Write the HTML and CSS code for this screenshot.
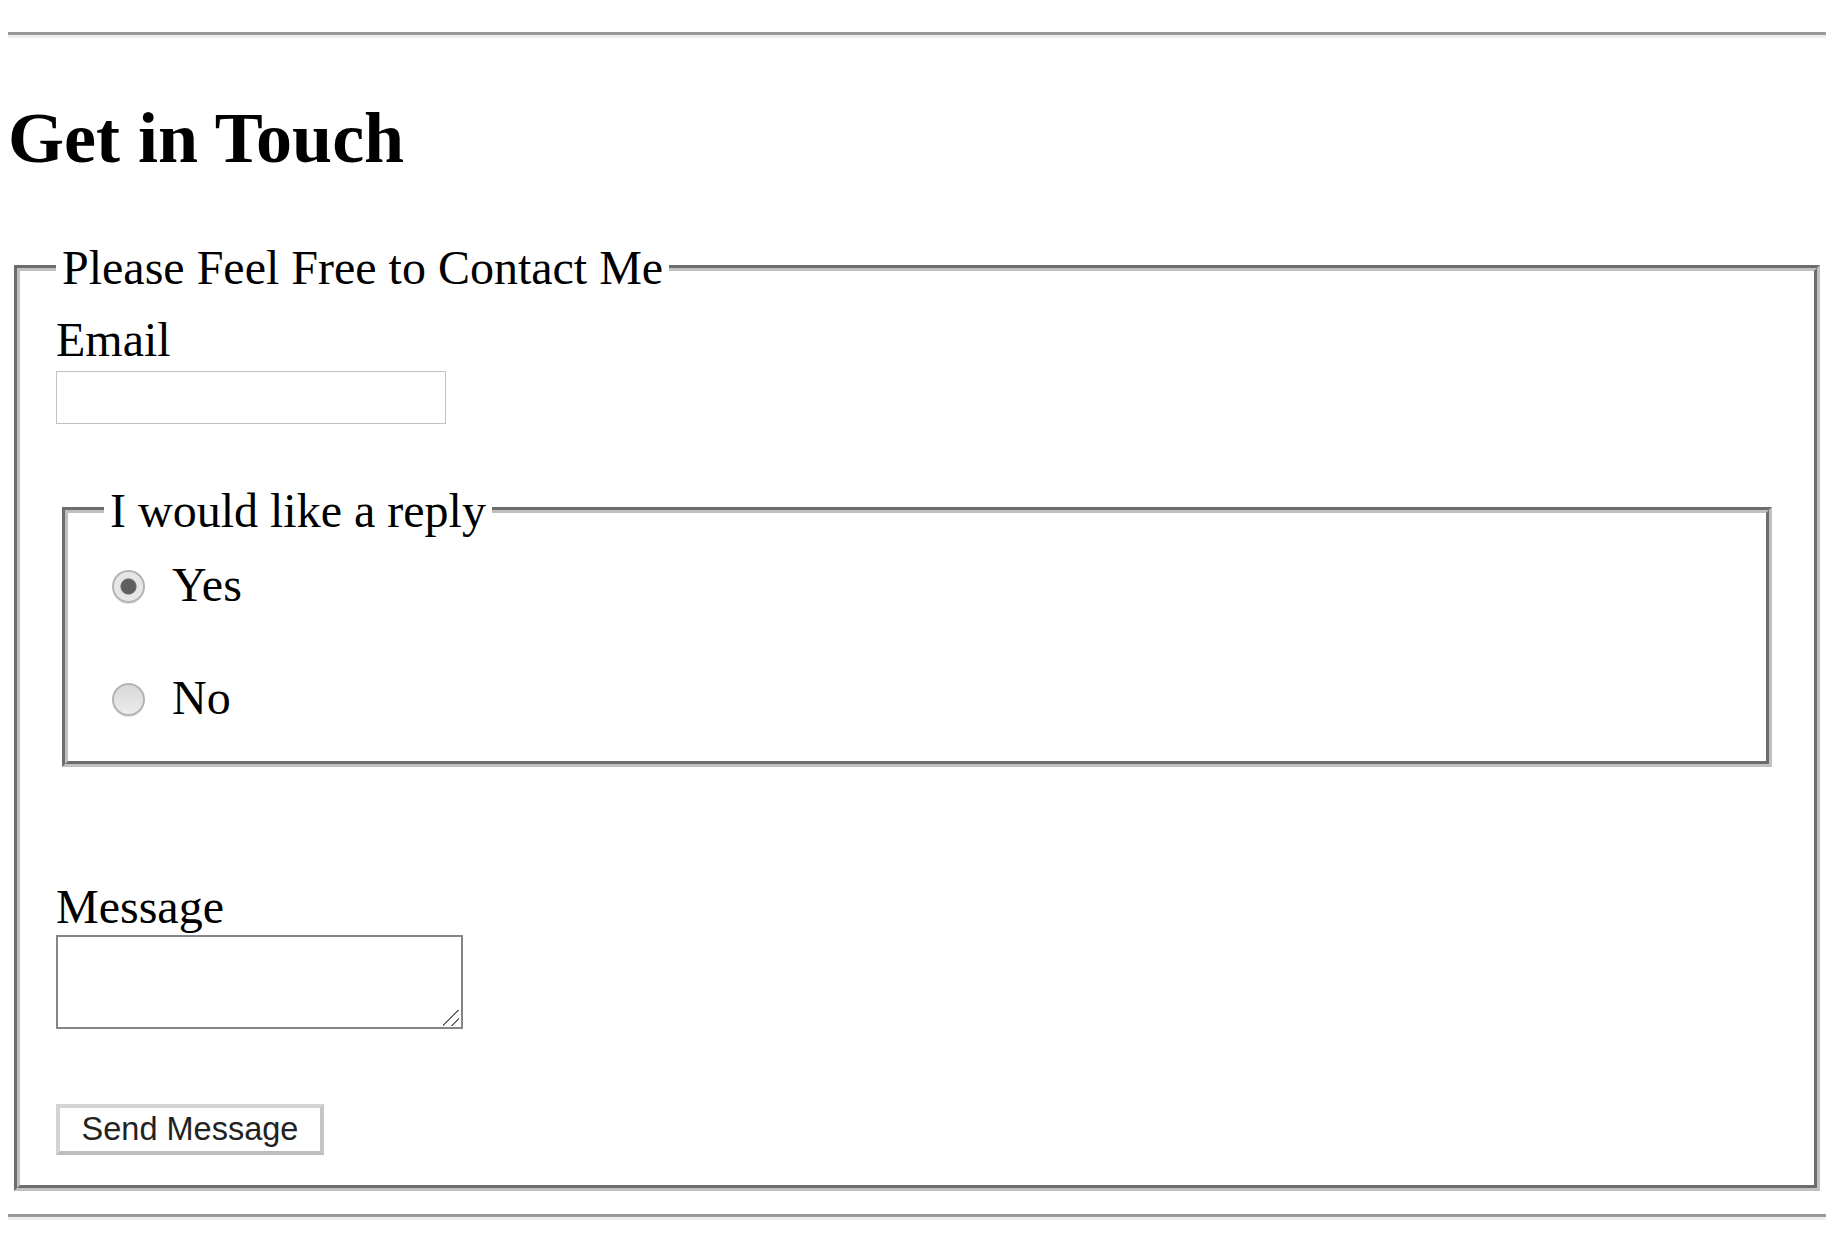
FILE: index.html
```html
<!DOCTYPE html>
<html lang="en">
<head>
<meta charset="utf-8">
<title>Get in Touch</title>
<link rel="stylesheet" href="styles.css">
</head>
<body>
<hr class="rule rule-top">
<div class="contact">
  <h1 class="title">Get in Touch</h1>
  <form class="form">
    <fieldset class="box box-outer">
      <legend class="box-legend">Please Feel Free to Contact Me</legend>
      <label class="field-label" for="email">Email</label>
      <input class="text-input" id="email" type="email">
      <fieldset class="box box-inner">
        <legend class="box-legend">I would like a reply</legend>
        <label class="option"><input class="radio" type="radio" name="reply" checked>Yes</label>
        <label class="option option-no"><input class="radio" type="radio" name="reply">No</label>
      </fieldset>
      <label class="field-label field-label-message" for="message">Message</label>
      <textarea class="text-area" id="message"></textarea>
      <button class="send" type="submit">Send Message</button>
    </fieldset>
  </form>
</div>
<hr class="rule rule-bottom">
</body>
</html>
```

FILE: styles.css
```css
html {
  background: #ffffff;
}

body {
  margin: 0 20px 0 8px;
  font-family: "Liberation Serif", "Times New Roman", serif;
  font-size: 48px;
  color: #000000;
}

.rule {
  height: 0;
  margin: 0;
  border: 0;
  border-top: 3px solid #9a9a9a;
  border-bottom: 3px solid #eeeeee;
}

.rule-top {
  margin-top: 32px;
}

.rule-bottom {
  margin-top: 23px;
}

.title {
  font-size: 72px;
  font-weight: bold;
  line-height: 83px;
  margin: 59px 0 60px;
}

.form {
  margin: 0;
}

.box {
  margin: 0 6px;
  border: 6px groove #c0c0c0;
  padding: 16.8px 36px 30px;
  min-width: 0;
}

.box-outer {
  padding-bottom: 30px;
}

.box-legend {
  padding: 0 6px;
  line-height: 55px;
}

.field-label {
  display: block;
  line-height: 55px;
}

.text-input {
  display: block;
  box-sizing: border-box;
  width: 390px;
  height: 53px;
  margin: 4px 0 0;
  padding: 0 4px;
  border: 1px solid #c2c2c2;
  background: #ffffff;
  font-size: 32px;
}

.box-inner {
  margin-top: 59px;
  padding-top: 19px;
  padding-bottom: 36px;
}

.option {
  display: block;
  line-height: 55px;
}

.option-no {
  margin-top: 58px;
}

.radio {
  appearance: none;
  -webkit-appearance: none;
  display: inline-block;
  box-sizing: border-box;
  width: 33px;
  height: 33px;
  margin: 0 27px 0 8px;
  vertical-align: -2px;
  border-radius: 50%;
  border: 2px solid #b4b4b4;
  background: linear-gradient(#d8d8d8, #ececec);
  box-shadow: 0 2px 1px -1px rgba(0, 0, 0, 0.12);
}

.radio:checked {
  background: radial-gradient(circle, #5f5f5f 0, #5f5f5f 6.5px, #6a6a6a 7.5px, #e4e4e4 8.5px, #ececec 100%);
}

.field-label-message {
  margin-top: 112px;
}

.text-area {
  display: block;
  box-sizing: border-box;
  width: 407px;
  height: 94px;
  margin: 1px 0 0;
  border: 2px solid #858585;
  background-color: #ffffff;
  background-image: linear-gradient(135deg, transparent 10.2px, #666666 10.2px, #666666 11.6px, transparent 11.6px, transparent 16.4px, #666666 16.4px, #666666 17.8px, transparent 17.8px);
  background-size: 16px 16px;
  background-repeat: no-repeat;
  background-position: right 2px bottom 1px;
  resize: none;
}

.send {
  display: block;
  box-sizing: border-box;
  width: 268px;
  height: 51px;
  margin: 75px 0 0;
  padding: 0;
  border: 4px solid;
  border-color: #d4d4d4 #c6c6c6 #bdbdbd #d4d4d4;
  background: #ffffff;
  color: #222222;
  font-family: "Liberation Sans", Arial, Helvetica, sans-serif;
  font-size: 32.5px;
  line-height: 43px;
}
```
